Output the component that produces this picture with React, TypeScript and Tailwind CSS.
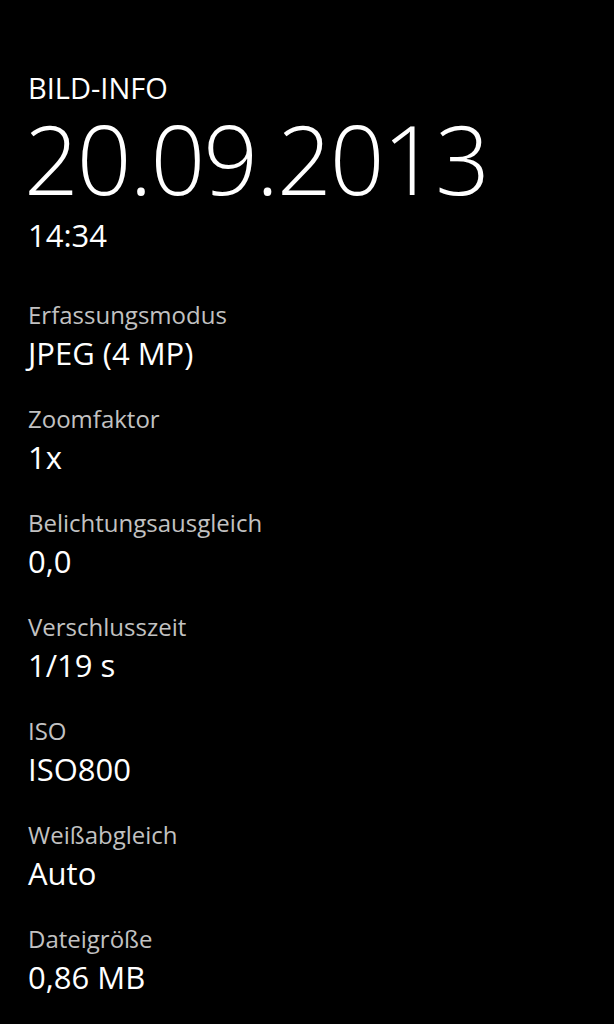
import React from "react";

const rows: [string, string][] = [
  ["Erfassungsmodus", "JPEG (4 MP)"],
  ["Zoomfaktor", "1x"],
  ["Belichtungsausgleich", "0,0"],
  ["Verschlusszeit", "1/19 s"],
  ["ISO", "ISO800"],
  ["Weißabgleich", "Auto"],
  ["Dateigröße", "0,86 MB"],
];

export default function App() {
  return (
    <div
      className="w-[614px] h-[1024px] bg-black text-white overflow-hidden pl-[28px]"
      style={{ fontFamily: '"Segoe UI", "Open Sans", "Noto Sans", sans-serif' }}
    >
      <div className="pt-[68px] text-[29px] leading-[40px]">BILD-INFO</div>
      <div className="text-[96px] font-light leading-[100px] tracking-[-2px] -ml-[4px]">20.09.2013</div>
      <div className="mt-[8px] text-[31px] leading-[38px]">14:34</div>
      <div className="mt-[44px] flex flex-col gap-[28px]">
        {rows.map(([label, value]) => (
          <div key={label} className="flex flex-col">
            <div className="text-[24px] leading-[34px] text-[#c2c2c2]">{label}</div>
            <div className="text-[31px] leading-[42px]">{value}</div>
          </div>
        ))}
      </div>
    </div>
  );
}
